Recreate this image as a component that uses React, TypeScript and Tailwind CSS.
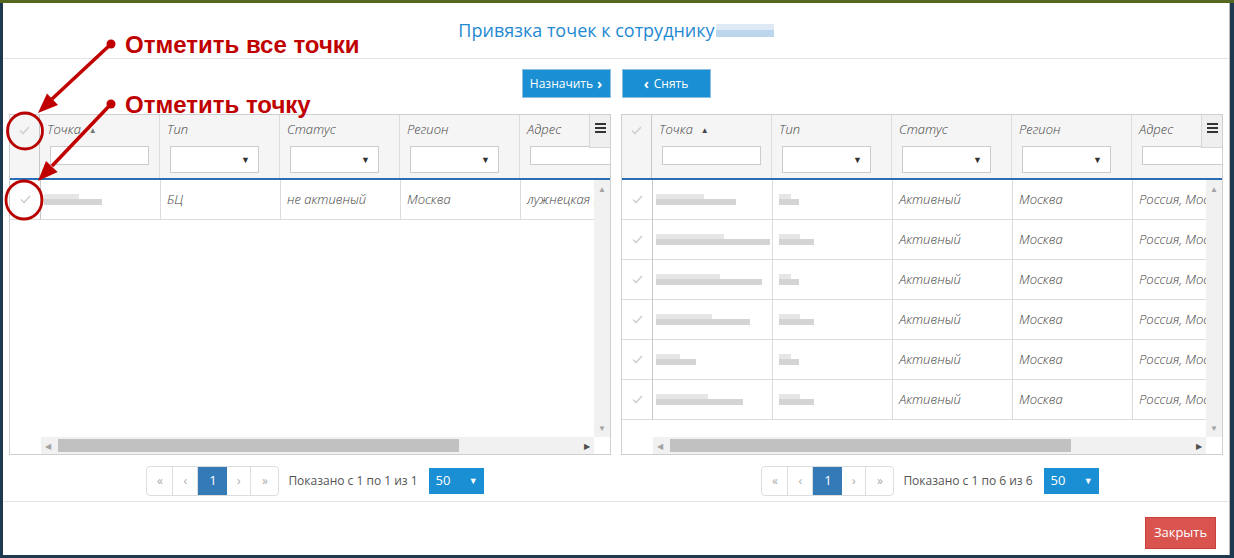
const cols = ["Точка", "Тип", "Статус", "Регион", "Адрес"];

type Row = { name?: number; type?: number; cells: string[] };

const leftRows: Row[] = [{ name: 58, cells: ["БЦ", "не активный", "Москва", "лужнецкая набережная"] }];

const rightRows: Row[] = [
  { name: 80, type: 20, cells: ["", "Активный", "Москва", "Россия, Москва"] },
  { name: 114, type: 35, cells: ["", "Активный", "Москва", "Россия, Москва"] },
  { name: 106, type: 20, cells: ["", "Активный", "Москва", "Россия, Москва"] },
  { name: 94, type: 35, cells: ["", "Активный", "Москва", "Россия, Москва"] },
  { name: 40, type: 20, cells: ["", "Активный", "Москва", "Россия, Москва"] },
  { name: 87, type: 35, cells: ["", "Активный", "Москва", "Россия, Москва"] },
];

function Check() {
  return (
    <svg width="11" height="9" viewBox="0 0 11 9">
      <path d="M1 4.5 L4 7.5 L10 1" fill="none" stroke="#d0d0d0" strokeWidth="1.6" />
    </svg>
  );
}

function Blob({ w }: { w: number }) {
  return (
    <div className="flex flex-col blur-[0.6px]" style={{ width: w }}>
      <div className="h-[5px] bg-[#e6e6e6]" style={{ width: Math.round(w * 0.6) }} />
      <div className="h-[6px] bg-[#d4d4d4]" />
    </div>
  );
}

function Grid({ rows, thumbLeft, sortFaded }: { rows: Row[]; thumbLeft: number; sortFaded?: boolean }) {
  return (
    <div className="relative w-[603px] h-[341px] border border-[#cfcfcf] bg-white flex flex-col overflow-hidden">
      {/* header */}
      <div className="h-[65px] flex bg-[#f5f5f5] border-b-2 border-[#2a6db5] overflow-hidden">
        <div className="w-[30px] shrink-0 border-r border-[#c8c8c8] flex justify-center pt-[11px]">
          <Check />
        </div>
        {cols.map((c, i) => (
          <div key={c} className="w-[120px] shrink-0 border-r border-[#dcdcdc] pl-[7px] pt-[5px]">
            <div className="h-[20px] flex items-center gap-[8px] text-[13px] font-light italic text-[#444]">
              {c}
              {i === 0 && <span className={`text-[8px] not-italic ${sortFaded ? "text-[#777]" : "text-[#444]"}`}>▲</span>}
            </div>
            {i === 0 || i === 4 ? (
              <div className="mt-[6px] ml-[3px] w-[99px] h-[19px] border border-[#ccc] bg-white" />
            ) : (
              <div className="mt-[6px] ml-[3px] w-[89px] h-[27px] border border-[#ccc] bg-white flex items-center justify-end pr-[8px] text-[9px] text-[#333]">
                ▼
              </div>
            )}
          </div>
        ))}
      </div>
      <div className="absolute right-0 top-0 w-[21px] h-[33px] bg-[#efefef] border-l border-b border-[#d6d6d6] flex justify-center pt-[8px]">
        <svg width="11" height="10" viewBox="0 0 11 10">
          <rect x="0" y="0" width="11" height="2" fill="#333" />
          <rect x="0" y="4" width="11" height="2" fill="#333" />
          <rect x="0" y="8" width="11" height="2" fill="#333" />
        </svg>
      </div>
      {/* body */}
      <div className="flex-1 flex flex-col">
        <div className="flex-1 flex overflow-hidden">
          <div className="w-[31px] shrink-0">
            {rows.map((_, i) => (
              <div key={i} className="h-[40px] border-r border-b border-[#c8c8c8] border-b-[#dcdcdc] flex items-center justify-center">
                <Check />
              </div>
            ))}
          </div>
          <div className="flex-1 overflow-hidden">
            {rows.map((r, i) => (
              <div key={i} className="h-[40px] flex border-b border-[#dcdcdc] w-[600px]">
                <div className="w-[120px] shrink-0 border-r border-[#dcdcdc] pl-[3px] flex items-center">
                  <Blob w={r.name ?? 60} />
                </div>
                {r.cells.map((c, j) => (
                  <div key={j} className="w-[120px] shrink-0 border-r border-[#dcdcdc] pl-[6px] flex items-center text-[13px] font-light italic text-[#444] whitespace-nowrap overflow-hidden">
                    {j === 0 && r.type ? <Blob w={r.type} /> : c}
                  </div>
                ))}
              </div>
            ))}
          </div>
          <div className="w-[16px] shrink-0 bg-[#f1f1f1] flex flex-col items-center justify-between py-[3px] text-[8px] text-[#a3a3a3]">
            <span>▲</span>
            <span>▼</span>
          </div>
        </div>
        <div className="h-[17px] flex">
          <div className="w-[31px] shrink-0" />
          <div className="flex-1 bg-[#f1f1f1] relative flex items-center justify-between px-[4px] text-[8px]">
            <span className="text-[#a3a3a3]">◀</span>
            <div className="absolute top-[2px] h-[13px] w-[401px] bg-[#c1c1c1]" style={{ left: thumbLeft }} />
            <span className="text-[#505050]">▶</span>
          </div>
          <div className="w-[16px] shrink-0" />
        </div>
      </div>
    </div>
  );
}

function Pager({ text }: { text: string }) {
  return (
    <div className="flex items-center justify-center h-[29px] text-[12px]">
      <div className="flex h-[30px] border border-[#ddd] rounded-[4px] overflow-hidden text-[#aaa]">
        <div className="w-[26px] flex items-center justify-center border-r border-[#ddd]">«</div>
        <div className="w-[25px] flex items-center justify-center border-r border-[#ddd]">‹</div>
        <div className="w-[29px] flex items-center justify-center bg-[#337ab7] text-white text-[13px]">1</div>
        <div className="w-[24px] flex items-center justify-center border-r border-[#ddd]">›</div>
        <div className="w-[27px] flex items-center justify-center">»</div>
      </div>
      <span className="ml-[9px] text-[#555]">{text}</span>
      <div className="ml-[11px] w-[55px] h-[26px] bg-[#1a8fd3] text-white flex items-center justify-between pl-[7px] pr-[6px] text-[13px]">
        50<span className="text-[9px]">▼</span>
      </div>
    </div>
  );
}

export default function App() {
  return (
    <div className="relative w-[1234px] h-[558px] bg-[#1d3a50] border-t-[3px] border-[#53671e] pl-[3px] overflow-hidden font-['Open_Sans',sans-serif]">
      <div className="w-[1227px] h-[552px] bg-white border-r border-[#bbb] flex flex-col">
        <div className="h-[56px] border-b border-[#e5e5e5] flex items-center justify-center pb-[1px]">
          <span className="text-[18px] text-[#1f89d1]">Привязка точек к сотруднику</span>
          <div className="ml-[1px] flex flex-col blur-[0.5px]">
            <div className="h-[6px] w-[58px] bg-[#dde9f5]" />
            <div className="h-[7px] w-[58px] bg-[#bcd6ee]" />
          </div>
        </div>
        <div className="pt-[10px] flex justify-center gap-[11px]">
          <button className="w-[89px] h-[29px] bg-[#1a8fd3] border border-[#8fbfe0] text-white text-[12px] flex items-center justify-center gap-[4px]">
            Назначить <span className="font-bold text-[14px] leading-none">›</span>
          </button>
          <button className="w-[89px] h-[29px] bg-[#1a8fd3] border border-[#8fbfe0] text-white text-[12px] flex items-center justify-center gap-[5px]">
            <span className="font-bold text-[14px] leading-none">‹</span> Снять
          </button>
        </div>
        <div className="mt-[16px] px-[6px] flex gap-[10px]">
          <Grid rows={leftRows} thumbLeft={17} sortFaded />
          <Grid rows={rightRows} thumbLeft={17} />
        </div>
        <div className="mt-[11px] px-[6px] flex gap-[10px]">
          <div className="w-[603px] pl-[10px]">
            <Pager text="Показано с 1 по 1 из 1" />
          </div>
          <div className="w-[603px] pl-[16px]">
            <Pager text="Показано с 1 по 6 из 6" />
          </div>
        </div>
        <div className="mt-[6px] border-t border-[#e5e5e5] flex justify-end pt-[15px] pr-[13px]">
          <button className="w-[71px] h-[32px] bg-[#d9534f] border border-[#c9403b] text-white text-[13px]">Закрыть</button>
        </div>
      </div>

      {/* annotations */}
      <div className="absolute left-[125px] top-[30px] text-[24px] font-bold text-[#c00000] font-['Liberation_Sans',Arial,sans-serif] leading-none">
        Отметить все точки
      </div>
      <div className="absolute left-[125px] top-[90px] text-[24px] font-bold text-[#c00000] font-['Liberation_Sans',Arial,sans-serif] leading-none">
        Отметить точку
      </div>
      <svg className="absolute left-0 top-[-3px] pointer-events-none" width="1234" height="558">
        <circle cx="111" cy="44" r="4.5" fill="#c00000" />
        <circle cx="111" cy="104" r="4.5" fill="#c00000" />
        <line x1="111" y1="44" x2="52" y2="99" stroke="#c00000" strokeWidth="3.5" />
        <line x1="111" y1="104" x2="52" y2="166" stroke="#c00000" strokeWidth="3.5" />
        <polygon points="38,113 58,105 47,93.5" fill="#c00000" />
        <polygon points="38,181 57.6,172 46,161" fill="#c00000" />
        <ellipse cx="25" cy="131" rx="17.5" ry="18" fill="none" stroke="#b80000" strokeWidth="2.8" />
        <ellipse cx="24" cy="200" rx="18" ry="19" fill="none" stroke="#b80000" strokeWidth="2.8" />
      </svg>
    </div>
  );
}
